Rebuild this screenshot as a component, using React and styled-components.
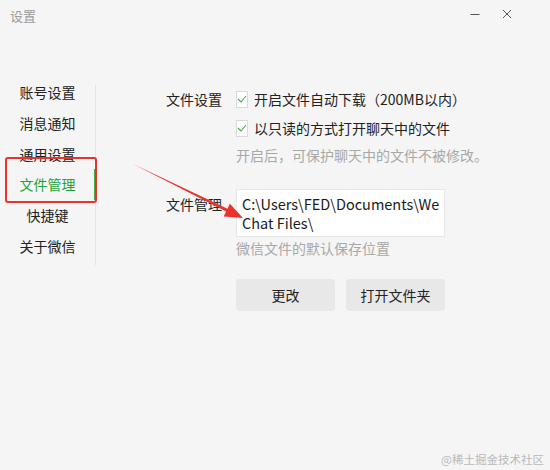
import styled, { createGlobalStyle } from "styled-components";

const Global = createGlobalStyle`
  html, body {
    margin: 0;
    padding: 0;
    background: #f5f5f5;
  }
  body {
    font-family: "Noto Sans CJK SC", "Noto Sans", sans-serif;
    color: #222;
  }
`;

const Window = styled.div`
  position: relative;
  width: 550px;
  height: 470px;
  background: #f5f5f5;
  overflow: hidden;
`;

const TitleBar = styled.div`
  display: flex;
  align-items: center;
  height: 30px;
  padding: 0 0 0 10px;
`;

const Title = styled.div`
  flex: 1;
  font-size: 13px;
  color: #9a9a9a;
`;

const Controls = styled.div`
  display: flex;
  align-items: center;
  gap: 22px;
  padding-right: 38px;
  color: #555;
  margin-top: -3px;
`;

const Main = styled.div`
  display: flex;
`;

const Sidebar = styled.div`
  display: flex;
  width: 96px;
  margin-top: 47px;
`;

const Menu = styled.div`
  display: flex;
  flex-direction: column;
  width: 95px;
`;

const MenuItem = styled.div`
  position: relative;
  height: 30.8px;
  line-height: 30.8px;
  text-align: center;
  font-size: 14px;
  color: ${(p) => (p.$active ? "#1fa33b" : "#222")};

  &::after {
    content: "";
    display: ${(p) => (p.$active ? "block" : "none")};
    position: absolute;
    right: -1px;
    top: 0;
    width: 2px;
    height: 100%;
    background: #3db143;
  }
`;

const Rail = styled.div`
  width: 1px;
  height: 180px;
  margin-top: 8px;
  background: #e4e4e4;
`;

const Content = styled.div`
  display: grid;
  grid-template-columns: 70px 209px;
  row-gap: 24px;
  margin: 58px 0 0 70px;
`;

const Label = styled.div`
  font-size: 14px;
  line-height: 22px;
  padding-top: ${(p) => p.$top || 0}px;
`;

const Stack = styled.div`
  display: flex;
  flex-direction: column;
`;

const CheckRow = styled.label`
  display: flex;
  align-items: center;
  gap: 6px;
  height: 22px;
  margin-bottom: ${(p) => p.$mb || 0}px;
  font-size: 14px;
  white-space: nowrap;
`;

const Box = styled.span`
  display: inline-flex;
  align-items: center;
  justify-content: center;
  width: 17px;
  height: 17px;
  box-sizing: border-box;
  background: #fff;
  border: 1px solid #dadada;
`;

const Hint = styled.div`
  font-size: 14px;
  line-height: 20px;
  color: #a8a8a8;
  white-space: nowrap;
  margin-top: ${(p) => p.$mt || 0}px;
`;

const PathBox = styled.div`
  width: 209px;
  box-sizing: border-box;
  padding: 4px 4px 4px 5px;
  background: #fff;
  border: 1px solid #e6e6e6;
  font-size: 14.5px;
  line-height: 19px;
  word-break: break-all;
  color: #1a1a1a;
`;

const Buttons = styled.div`
  display: flex;
  gap: 11px;
  margin-top: 21px;
`;

const Button = styled.button`
  width: 99px;
  height: 32px;
  border: none;
  border-radius: 4px;
  background: #e8e8e8;
  font-family: inherit;
  font-size: 14px;
  color: #222;
  padding: 0;
`;

const Annotation = styled.div`
  position: absolute;
  left: 5px;
  top: 157px;
  width: 92px;
  height: 46px;
  box-sizing: border-box;
  border: 2px solid #e8342c;
  border-radius: 3px;
  pointer-events: none;
`;

const ArrowLayer = styled.svg`
  position: absolute;
  left: 0;
  top: 0;
  pointer-events: none;
`;

const Watermark = styled.div`
  position: absolute;
  right: 6px;
  bottom: 3px;
  font-size: 11.5px;
  color: #b9b9b9;
`;

const Check = () => (
  <svg width="10" height="8" viewBox="0 0 10 8">
    <path d="M1 4 L4 7 L9 1" fill="none" stroke="#3db143" strokeWidth="1.1" />
  </svg>
);

const items = ["账号设置", "消息通知", "通用设置", "文件管理", "快捷键", "关于微信"];

export default function App() {
  return (
    <Window>
      <Global />
      <TitleBar>
        <Title>设置</Title>
        <Controls>
          <svg width="10" height="10" viewBox="0 0 10 10">
            <path d="M0.5 5.5 H9.5" stroke="#555" strokeWidth="1" />
          </svg>
          <svg width="10" height="10" viewBox="0 0 10 10">
            <path d="M1 1 L9 9 M9 1 L1 9" stroke="#555" strokeWidth="1" />
          </svg>
        </Controls>
      </TitleBar>
      <Main>
        <Sidebar>
          <Menu>
            {items.map((t) => (
              <MenuItem key={t} $active={t === "文件管理"}>
                {t}
              </MenuItem>
            ))}
          </Menu>
          <Rail />
        </Sidebar>
        <Content>
          <Label>文件设置</Label>
          <Stack>
            <CheckRow $mb={7}>
              <Box>
                <Check />
              </Box>
              开启文件自动下载（200MB以内）
            </CheckRow>
            <CheckRow $mb={6}>
              <Box>
                <Check />
              </Box>
              以只读的方式打开聊天中的文件
            </CheckRow>
            <Hint>开启后，可保护聊天中的文件不被修改。</Hint>
          </Stack>
          <Label $top={4}>文件管理</Label>
          <Stack>
            <PathBox>C:\Users\FED\Documents\WeChat Files\</PathBox>
            <Hint $mt={1}>微信文件的默认保存位置</Hint>
            <Buttons>
              <Button>更改</Button>
              <Button>打开文件夹</Button>
            </Buttons>
          </Stack>
        </Content>
      </Main>
      <Annotation />
      <ArrowLayer width="550" height="470">
        <polygon
          points="133,164 227.5,208.8 229.9,203.8 243,218 223.7,216.4 226.1,211.5"
          fill="#e8342c"
        />
      </ArrowLayer>
      <Watermark>@稀土掘金技术社区</Watermark>
    </Window>
  );
}
